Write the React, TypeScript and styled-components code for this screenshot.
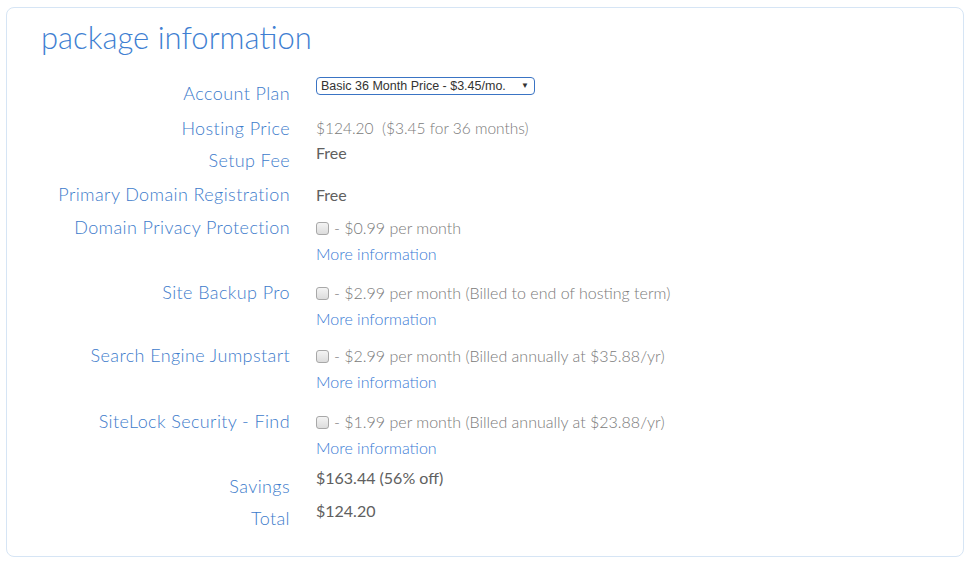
import React from "react";
import styled, { createGlobalStyle } from "styled-components";

const Global = createGlobalStyle`
  html, body { margin: 0; padding: 0; background: #fff; }
  body { font-family: Lato, "Open Sans", sans-serif; }
`;

const Page = styled.div`
  padding: 7px 5px 5px 6px;
`;

const Panel = styled.section`
  width: 956px;
  height: 548px;
  border: 1px solid #d6e5f5;
  border-radius: 8px;
  box-sizing: content-box;
`;

const Title = styled.h2`
  margin: 0;
  padding: 9px 0 0 34px;
  height: 42px;
  font-family: Lato, sans-serif;
  font-weight: 300;
  font-size: 31px;
  line-height: 40px;
  color: #3f7fd2;
`;

const Rows = styled.div`
  padding-top: 22px;
`;

const Row = styled.div<{ $h: number }>`
  display: grid;
  grid-template-columns: 283px 1fr;
  column-gap: 26px;
  height: ${(p) => p.$h}px;
`;

const Label = styled.div`
  text-align: right;
  font-family: Lato, sans-serif;
  font-weight: 300;
  font-size: 18px;
  line-height: 24px;
  letter-spacing: 0.4px;
  color: #3d7bcb;
`;

const Value = styled.div<{ $dy: number }>`
  margin-top: ${(p) => p.$dy}px;
  font-family: Lato, sans-serif;
  font-size: 16px;
  line-height: 24px;
  color: #666;
`;

const Light = styled.span`
  font-weight: 300;
  font-size: 15.5px;
  color: #7a7a7a;
`;

const Strong = styled.span`
  font-weight: 400;
  color: #606060;
`;

const Select = styled.div`
  display: flex;
  align-items: center;
  justify-content: space-between;
  box-sizing: border-box;
  width: 219px;
  height: 18px;
  padding: 0 5px 0 4px;
  border: 1px solid #3a74c4;
  border-radius: 4px;
  font-family: "Liberation Sans", Arial, sans-serif;
  font-size: 12.5px;
  line-height: 16px;
  color: #333;
`;

const Arrow = styled.span`
  font-size: 8px;
  color: #333;
`;

const CheckLine = styled.div`
  display: flex;
  align-items: center;
  gap: 5px;
  font-weight: 300;
  color: #7a7a7a;
`;

const Box = styled.span`
  display: inline-block;
  width: 11px;
  height: 11px;
  border: 1px solid #a8a8a8;
  border-radius: 3px;
  background: linear-gradient(#f4f4f4, #dcdcdc);
`;

const More = styled.a`
  display: block;
  margin-top: 2px;
  font-weight: 300;
  color: #3a7bd5;
  text-decoration: none;
`;

type Addon = { label: string; price: string; h: number };

const addons: Addon[] = [
  { label: "Domain Privacy Protection", price: "- $0.99 per month", h: 65 },
  { label: "Site Backup Pro", price: "- $2.99 per month (Billed to end of hosting term)", h: 63 },
  { label: "Search Engine Jumpstart", price: "- $2.99 per month (Billed annually at $35.88/yr)", h: 66 },
  { label: "SiteLock Security - Find", price: "- $1.99 per month (Billed annually at $23.88/yr)", h: 65 },
];

export default function App() {
  return (
    <Page>
      <Global />
      <Panel>
        <Title>package information</Title>
        <Rows>
          <Row $h={35}>
            <Label>Account Plan</Label>
            <Value $dy={-4}>
              <Select>
                <span>Basic 36 Month Price - $3.45/mo.</span>
                <Arrow>▼</Arrow>
              </Select>
            </Value>
          </Row>
          <Row $h={32}>
            <Label>Hosting Price</Label>
            <Value $dy={0}>
              <Light>$124.20&nbsp; ($3.45 for 36 months)</Light>
            </Value>
          </Row>
          <Row $h={34}>
            <Label>Setup Fee</Label>
            <Value $dy={-7}>
              <Strong>Free</Strong>
            </Value>
          </Row>
          <Row $h={33}>
            <Label>Primary Domain Registration</Label>
            <Value $dy={1}>
              <Strong>Free</Strong>
            </Value>
          </Row>
          {addons.map((a) => (
            <Row key={a.label} $h={a.h}>
              <Label>{a.label}</Label>
              <Value $dy={1}>
                <CheckLine>
                  <Box />
                  <span>{a.price}</span>
                </CheckLine>
                <More href="#">More information</More>
              </Value>
            </Row>
          ))}
          <Row $h={32}>
            <Label>Savings</Label>
            <Value $dy={-8}>
              <Strong>$163.44 (56% off)</Strong>
            </Value>
          </Row>
          <Row $h={32}>
            <Label>Total</Label>
            <Value $dy={-7}>
              <Strong>$124.20</Strong>
            </Value>
          </Row>
        </Rows>
      </Panel>
    </Page>
  );
}
